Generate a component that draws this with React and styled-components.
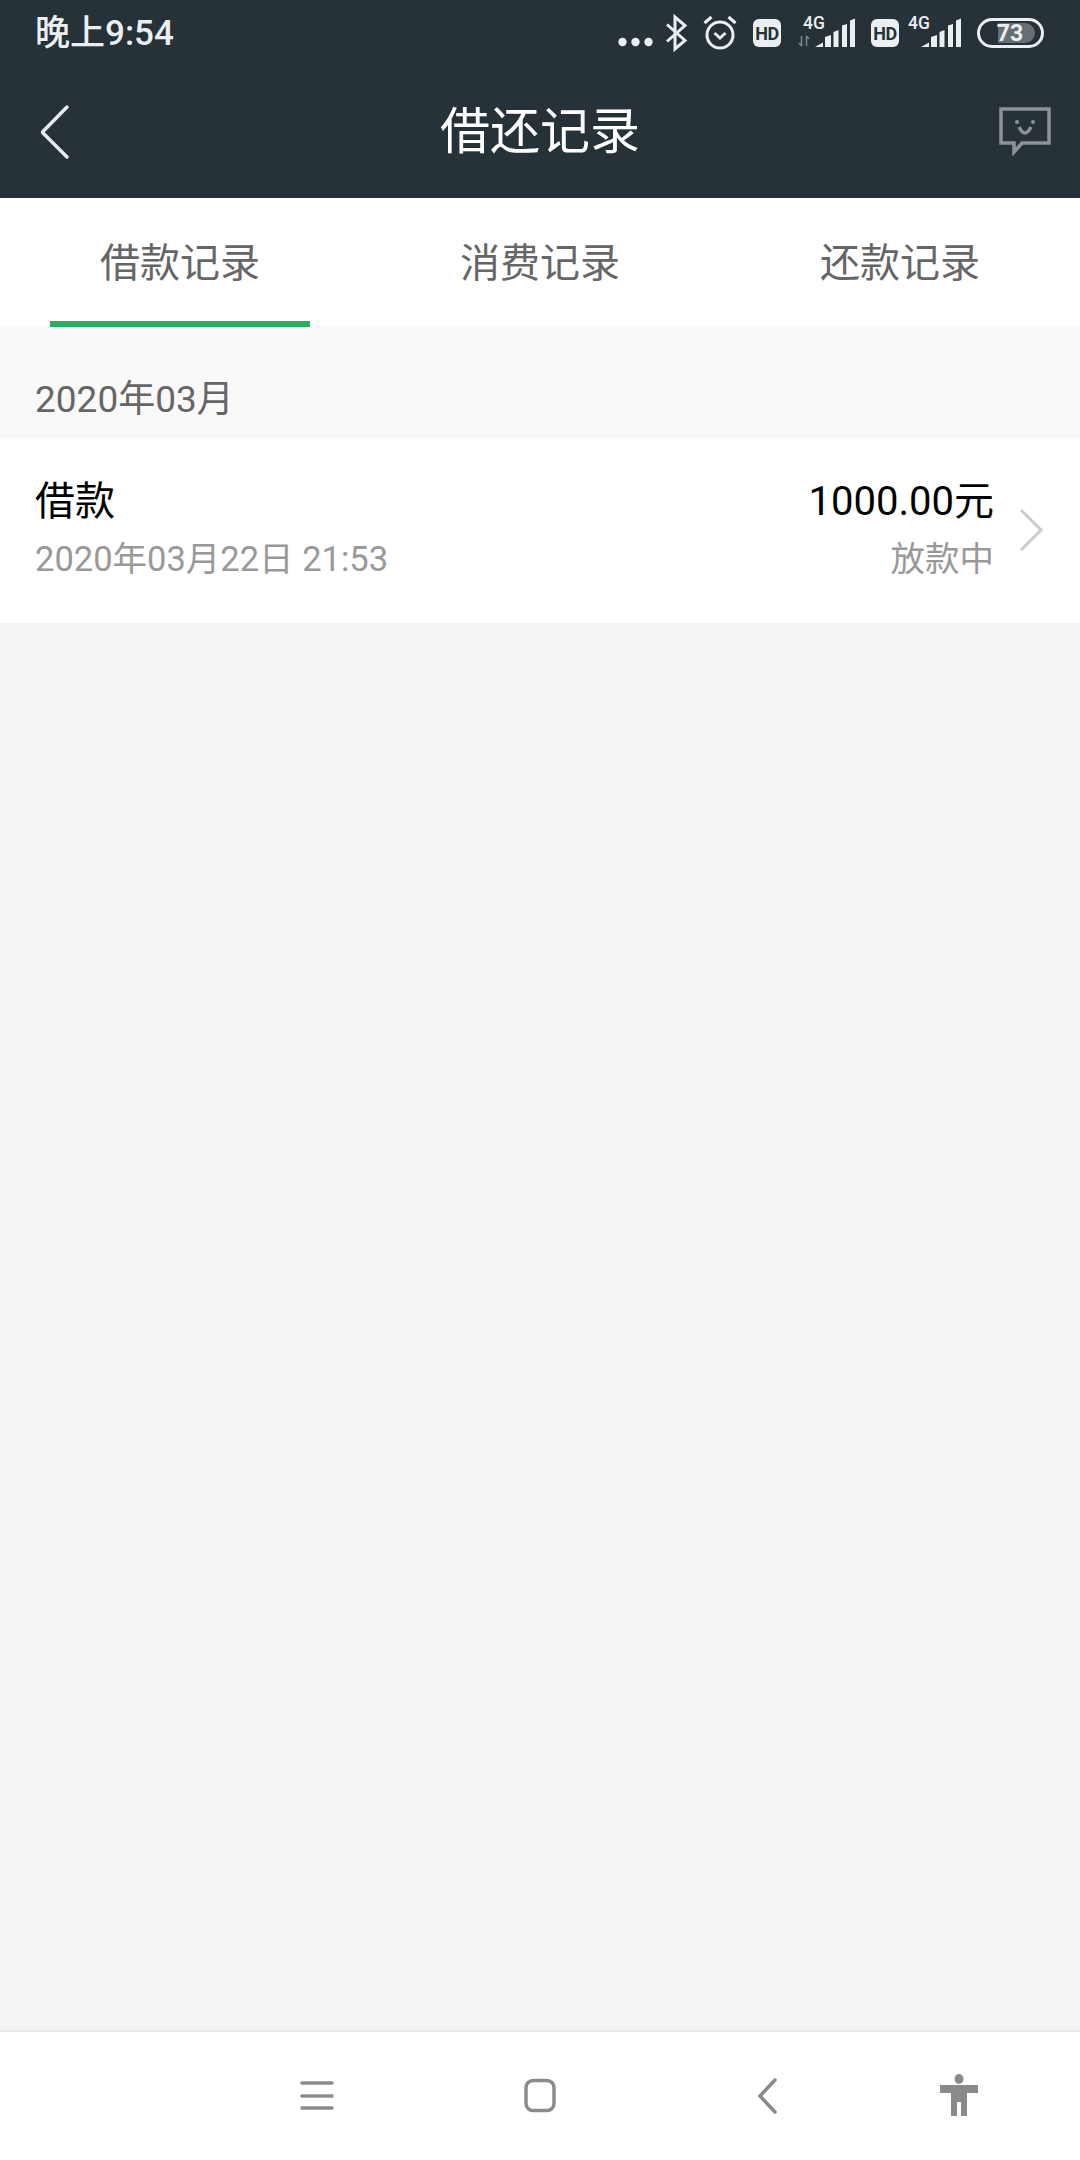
import styled, { createGlobalStyle } from "styled-components";

const GlobalStyle = createGlobalStyle`
  html, body {
    margin: 0;
    padding: 0;
    background: #f4f4f4;
  }
  body {
    font-family: Roboto, "Noto Sans CJK SC", sans-serif;
  }
`;

const Page = styled.div`
  width: 1080px;
  height: 2160px;
  display: flex;
  flex-direction: column;
  overflow: hidden;
  background: #f4f4f4;
`;

const Header = styled.header`
  background: #263238;
  color: #fff;
`;

const StatusBar = styled.div`
  height: 66px;
  padding: 15px 36px 0 35px;
  box-sizing: border-box;
  display: flex;
  align-items: flex-start;
  justify-content: space-between;
`;

const Clock = styled.span`
  font-size: 35px;
  font-weight: 500;
  line-height: 38px;
  color: #eceff1;
`;

const StatusIcons = styled.div`
  display: flex;
  align-items: flex-start;
`;

const StatusIcon = styled.svg`
  display: block;
  height: 36px;
  flex: none;
  overflow: visible;
  margin-left: ${(p) => p.$gap}px;
`;

const NavBar = styled.div`
  height: 132px;
  padding: 0 30px;
  display: grid;
  grid-template-columns: 1fr auto 1fr;
  align-items: center;
`;

const Title = styled.h1`
  margin: 0;
  font-size: 50px;
  font-weight: 400;
  line-height: 60px;
`;

const BackButton = styled.svg`
  display: block;
  width: 30px;
  height: 56px;
  margin-left: 10px;
`;

const FeedbackButton = styled.svg`
  display: block;
  width: 54px;
  height: 50px;
  justify-self: end;
  margin: -2px -2px 0 0;
`;

const Tabs = styled.nav`
  height: 129px;
  display: flex;
  background: #fff;
`;

const Tab = styled.div`
  width: 360px;
  display: flex;
  justify-content: center;
`;

const TabLabel = styled.div`
  width: 260px;
  box-sizing: border-box;
  display: flex;
  align-items: center;
  justify-content: center;
  font-size: 40px;
  color: #666;
  border-bottom: 6px solid ${(p) => (p.$active ? "#27ae60" : "transparent")};
`;

const MonthHeader = styled.div`
  height: 112px;
  box-sizing: border-box;
  padding: 26px 0 0 35px;
  display: flex;
  align-items: center;
  background: #f9f9f9;
  font-size: 37px;
  color: #666;
`;

const RecordRow = styled.div`
  height: 184px;
  box-sizing: border-box;
  padding: 0 36px 2px 35px;
  display: flex;
  align-items: center;
  background: #fff;
`;

const RecordInfo = styled.div`
  display: flex;
  flex-direction: column;
  gap: 6px;
  flex: 1;
`;

const RecordAmount = styled(RecordInfo)`
  flex: none;
  align-items: flex-end;
`;

const PrimaryText = styled.div`
  font-size: 40px;
  line-height: 52px;
  color: #000;
`;

const SecondaryText = styled.div`
  font-size: 34.5px;
  line-height: 50px;
  color: #999;
`;

const Chevron = styled.svg`
  display: block;
  width: 26px;
  height: 46px;
  margin-left: 24px;
`;

const Content = styled.main`
  flex: 1;
`;

const SystemNav = styled.footer`
  height: 130px;
  box-sizing: border-box;
  padding-left: 206px;
  display: grid;
  grid-template-columns: 222px 224px 230px 154px;
  align-items: center;
  justify-items: center;
  background: #fff;
  border-top: 2px solid #e8e8e8;
`;

const NavIcon = styled.svg`
  display: block;
  width: 44px;
  height: 48px;
  color: #8a8a8a;
`;

const Dots = () => (
  <StatusIcon viewBox="0 0 35 36" width="35" $gap={0}>
    <circle cx="4.5" cy="27" r="4.2" fill="#eceff1" />
    <circle cx="17.5" cy="27" r="4.2" fill="#eceff1" />
    <circle cx="30.5" cy="27" r="4.2" fill="#eceff1" />
  </StatusIcon>
);

const Bluetooth = () => (
  <StatusIcon viewBox="0 0 22 36" width="22" $gap={12}>
    <path
      d="M2 9.5 L20 25.5 L10 34 V2 L20 10.5 L2 26.5"
      fill="none"
      stroke="#eceff1"
      strokeWidth="3"
    />
  </StatusIcon>
);

const Alarm = () => (
  <StatusIcon viewBox="0 0 34 36" width="34" $gap={16}>
    <circle cx="17" cy="20" r="13" fill="none" stroke="#eceff1" strokeWidth="3" />
    <path d="M11.5 18 L17 23 L22.5 18" fill="none" stroke="#eceff1" strokeWidth="3" />
    <path d="M1.5 8 L8.5 2 M32.5 8 L25.5 2" stroke="#eceff1" strokeWidth="3" />
  </StatusIcon>
);

const HdBadge = ({ gap }) => (
  <StatusIcon viewBox="0 0 28 36" width="28" $gap={gap}>
    <rect x="0" y="4" width="28" height="28" rx="6" fill="#eceff1" />
    <text
      x="14"
      y="24.500"
      textAnchor="middle"
      fontFamily="Roboto, sans-serif"
      fontWeight="700"
      fontSize="18"
      letterSpacing="-0.5"
      fill="#263238"
    >
      HD
    </text>
  </StatusIcon>
);

const Signal = ({ gap, arrows }) => (
  <StatusIcon viewBox={arrows ? "0 0 57 36" : "0 0 53 36"} width={arrows ? 57 : 53} $gap={gap}>
    <g transform={arrows ? "translate(4 0)" : undefined}>
      <text x={arrows ? 1 : 0} y="14" fontFamily="Roboto, sans-serif" fontWeight="500" fontSize="17.500" fill="#eceff1">
        4G
      </text>
      <g transform="translate(13 0)">
        <path d="M0 32 L8 27.5 V32 Z" fill="#eceff1" />
        <path d="M10 32 V22 L16 20 V32 Z" fill="#eceff1" />
        <path d="M18.500 32 V17 L23.500 15 V32 Z" fill="#eceff1" />
        <path d="M27 32 V10.500 L32 9 V32 Z" fill="#eceff1" />
        <path d="M35 32 V5.500 L40 3.500 V32 Z" fill="#eceff1" />
      </g>
    </g>
    {arrows && (
      <path d="M3.500 21 V31 M1 28 L3.500 31 M8.500 31 V21 M8.500 21 L11 24" fill="none" stroke="#78848a" strokeWidth="1.6" />
    )}
  </StatusIcon>
);

const Battery = () => (
  <StatusIcon viewBox="0 0 67 36" width="67" $gap={16}>
    <rect x="1.500" y="4.500" width="64" height="27" rx="13.500" fill="none" stroke="#eceff1" strokeWidth="3" />
    <path d="M21 8 H48 A10 10 0 0 1 58 18 A10 10 0 0 1 48 28 H21 Z" fill="#666f74" />
    <text
      x="33"
      y="26"
      textAnchor="middle"
      fontFamily="Roboto, sans-serif"
      fontWeight="700"
      fontSize="23"
      fill="#eceff1"
    >
      73
    </text>
  </StatusIcon>
);

const App = () => {
  return (
    <>
      <GlobalStyle />
      <Page>
        <Header>
          <StatusBar>
            <Clock>晚上9:54</Clock>
            <StatusIcons>
              <Dots />
              <Bluetooth />
              <Alarm />
              <HdBadge gap={16} />
              <Signal gap={17} arrows />
              <HdBadge gap={16} />
              <Signal gap={9} />
              <Battery />
            </StatusIcons>
          </StatusBar>
          <NavBar>
            <BackButton viewBox="0 0 30 56">
              <path d="M27 3 L3 27.500 Q2 28 3 29 L27 53" fill="none" stroke="#e8ebec" strokeWidth="3.500" strokeLinecap="round" />
            </BackButton>
            <Title>借还记录</Title>
            <FeedbackButton viewBox="0 0 54 50">
              <path
                d="M3 3 H51 V37 H24 L16 46 V37 H3 Z"
                fill="none"
                stroke="#8b9397"
                strokeWidth="3.500"
              />
              <circle cx="19" cy="16" r="2" fill="#8b9397" />
              <circle cx="35" cy="16" r="2" fill="#8b9397" />
              <path d="M21 21 Q27 33 33 21" fill="none" stroke="#8b9397" strokeWidth="3.500" />
            </FeedbackButton>
          </NavBar>
        </Header>
        <Tabs>
          <Tab>
            <TabLabel $active>借款记录</TabLabel>
          </Tab>
          <Tab>
            <TabLabel>消费记录</TabLabel>
          </Tab>
          <Tab>
            <TabLabel>还款记录</TabLabel>
          </Tab>
        </Tabs>
        <MonthHeader>2020年03月</MonthHeader>
        <RecordRow>
          <RecordInfo>
            <PrimaryText>借款</PrimaryText>
            <SecondaryText>2020年03月22日 21:53</SecondaryText>
          </RecordInfo>
          <RecordAmount>
            <PrimaryText>1000.00元</PrimaryText>
            <SecondaryText>放款中</SecondaryText>
          </RecordAmount>
          <Chevron viewBox="0 0 26 46">
            <path d="M3 3 L23 23 L3 43" fill="none" stroke="#ccc" strokeWidth="3" />
          </Chevron>
        </RecordRow>
        <Content />
        <SystemNav>
          <NavIcon viewBox="0 0 44 48">
            <path d="M7 11 H37 M7 24 H37 M7 36 H37" stroke="currentColor" strokeWidth="3.500" strokeLinecap="round" />
          </NavIcon>
          <NavIcon viewBox="0 0 44 48">
            <rect x="8" y="8.500" width="28" height="30" rx="7" fill="none" stroke="currentColor" strokeWidth="3.500" />
          </NavIcon>
          <NavIcon viewBox="0 0 44 48">
            <path d="M30 8 L15 24 L30 40" fill="none" stroke="currentColor" strokeWidth="3.500" strokeLinecap="round" />
          </NavIcon>
          <NavIcon viewBox="0 0 44 48">
            <ellipse cx="22" cy="7" rx="4.500" ry="5" fill="currentColor" />
            <path d="M3 13 H41 V21 H30 V44 H24 V30 H20 V44 H14 V21 H3 Z" fill="currentColor" />
          </NavIcon>
        </SystemNav>
      </Page>
    </>
  );
};

export default App;
